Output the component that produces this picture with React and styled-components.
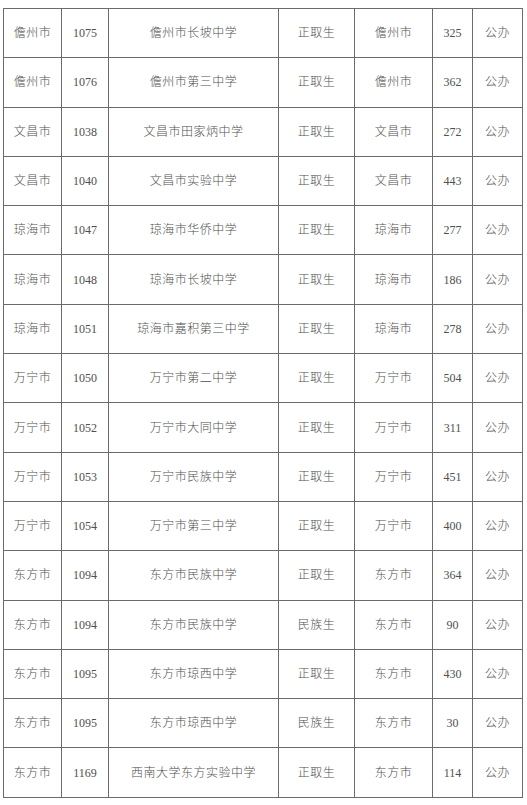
import React from 'react';
import styled, { createGlobalStyle } from 'styled-components';

const GlobalStyle = createGlobalStyle`
  html, body {
    margin: 0;
    padding: 0;
    background: #fff;
    overflow: hidden;
  }
`;

const Page = styled.div`
  padding: 8px 0 0 3px;
`;

const Table = styled.table`
  border-collapse: collapse;
  table-layout: fixed;
  width: 519px;
  font-family: "Liberation Serif", "Noto Sans CJK SC", serif;
  font-size: 12px;
  font-weight: 300;
  color: #505050;
`;

const Row = styled.tr`
  height: 49.3px;
`;

const Cell = styled.td`
  border: 1px solid #6b6b6b;
  text-align: center;
  vertical-align: middle;
  padding: 0;
  line-height: 14px;
  white-space: nowrap;
  letter-spacing: ${p => (p.$num ? '0' : '0.5px')};
`;

const widths = [58, 47, 170, 76, 78, 40, 50];

const rows = [
  ['儋州市', '1075', '儋州市长坡中学', '正取生', '儋州市', '325', '公办'],
  ['儋州市', '1076', '儋州市第三中学', '正取生', '儋州市', '362', '公办'],
  ['文昌市', '1038', '文昌市田家炳中学', '正取生', '文昌市', '272', '公办'],
  ['文昌市', '1040', '文昌市实验中学', '正取生', '文昌市', '443', '公办'],
  ['琼海市', '1047', '琼海市华侨中学', '正取生', '琼海市', '277', '公办'],
  ['琼海市', '1048', '琼海市长坡中学', '正取生', '琼海市', '186', '公办'],
  ['琼海市', '1051', '琼海市嘉积第三中学', '正取生', '琼海市', '278', '公办'],
  ['万宁市', '1050', '万宁市第二中学', '正取生', '万宁市', '504', '公办'],
  ['万宁市', '1052', '万宁市大同中学', '正取生', '万宁市', '311', '公办'],
  ['万宁市', '1053', '万宁市民族中学', '正取生', '万宁市', '451', '公办'],
  ['万宁市', '1054', '万宁市第三中学', '正取生', '万宁市', '400', '公办'],
  ['东方市', '1094', '东方市民族中学', '正取生', '东方市', '364', '公办'],
  ['东方市', '1094', '东方市民族中学', '民族生', '东方市', '90', '公办'],
  ['东方市', '1095', '东方市琼西中学', '正取生', '东方市', '430', '公办'],
  ['东方市', '1095', '东方市琼西中学', '民族生', '东方市', '30', '公办'],
  ['东方市', '1169', '西南大学东方实验中学', '正取生', '东方市', '114', '公办'],
];

export default function App() {
  return (
    <Page>
      <GlobalStyle />
      <Table>
        <colgroup>
          {widths.map((w, i) => (
            <col key={i} style={{ width: w }} />
          ))}
        </colgroup>
        <tbody>
          {rows.map((r, i) => (
            <Row key={i}>
              {r.map((v, j) => (
                <Cell key={j} $num={j === 1 || j === 5}>
                  {v}
                </Cell>
              ))}
            </Row>
          ))}
        </tbody>
      </Table>
    </Page>
  );
}
